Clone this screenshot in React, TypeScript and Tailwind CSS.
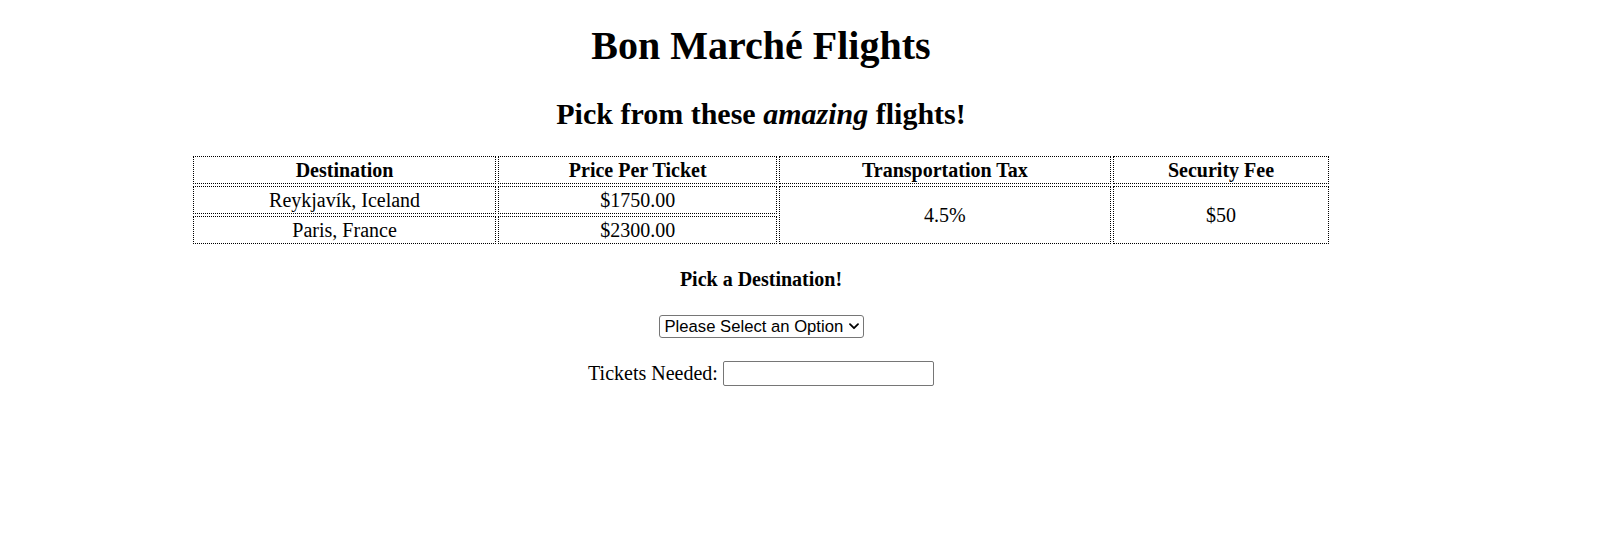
export default function App() {
  return (
    <div className="w-[1522px] flex flex-col items-center text-center text-[20px] text-black bg-white font-['Liberation_Serif','Times_New_Roman',serif]">
      <h1 className="mt-[23px] text-[40px] leading-[46px] font-bold">Bon Marché Flights</h1>
      <h2 className="mt-[28px] text-[30px] leading-[34px] font-bold">
        Pick from these <em className="italic">amazing</em> flights!
      </h2>

      <table className="mt-[22.5px] w-[1140.5px] table-fixed border-separate border-spacing-[2.5px]">
        <thead>
          <tr>
            <th className="w-[303px] border border-dotted border-black pt-[1.5px] pb-px leading-[24px] font-bold">Destination</th>
            <th className="w-[278px] border border-dotted border-black pt-[1.5px] pb-px leading-[24px] font-bold">Price Per Ticket</th>
            <th className="w-[331px] border border-dotted border-black pt-[1.5px] pb-px leading-[24px] font-bold">Transportation Tax</th>
            <th className="w-[216px] border border-dotted border-black pt-[1.5px] pb-px leading-[24px] font-bold">Security Fee</th>
          </tr>
        </thead>
        <tbody>
          <tr>
            <td className="border border-dotted border-black py-px leading-[24px]">Reykjavík, Iceland</td>
            <td className="border border-dotted border-black py-px leading-[24px]">$1750.00</td>
            <td rowSpan={2} className="border border-dotted border-black py-px leading-[24px] align-middle">4.5%</td>
            <td rowSpan={2} className="border border-dotted border-black py-px leading-[24px] align-middle">$50</td>
          </tr>
          <tr>
            <td className="border border-dotted border-black py-px leading-[24px]">Paris, France</td>
            <td className="border border-dotted border-black py-px leading-[24px]">$2300.00</td>
          </tr>
        </tbody>
      </table>

      <h4 className="mt-[22px] leading-[23px] font-bold">Pick a Destination!</h4>

      <div className="relative mt-[24px]">
        <select
          defaultValue=""
          className="block h-[23px] w-[205px] appearance-none rounded-[3px] border border-[#767676] bg-white pl-[5px] pr-[20px] text-left text-[16.67px] leading-[21px] text-black font-['Liberation_Sans',Arial,sans-serif]"
        >
          <option value="">Please Select an Option</option>
          <option value="reykjavik">Reykjavík, Iceland</option>
          <option value="paris">Paris, France</option>
        </select>
        <svg
          className="pointer-events-none absolute right-[5px] top-[8px]"
          width="10"
          height="7"
          viewBox="0 0 10 7"
          fill="none"
        >
          <polyline points="1,1.2 5,5.2 9,1.2" stroke="#000" strokeWidth="1.8" strokeLinecap="round" strokeLinejoin="round" />
        </svg>
      </div>

      <div className="mt-[23px] flex items-start gap-[5px]">
        <label htmlFor="tickets" className="leading-[24px]">Tickets Needed:</label>
        <input
          id="tickets"
          type="text"
          className="h-[25px] w-[211px] rounded-[2px] border border-[#767676] bg-white px-[3px] text-[16.67px] font-['Liberation_Sans',Arial,sans-serif]"
        />
      </div>
    </div>
  )
}
